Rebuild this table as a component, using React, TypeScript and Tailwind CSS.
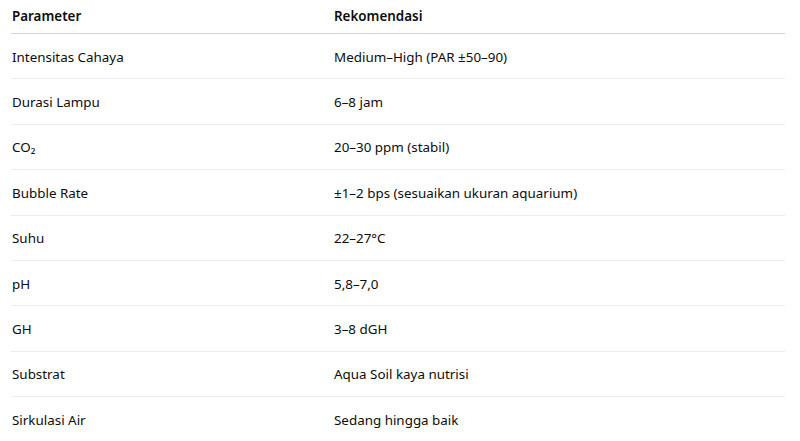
const rows: [string, string][] = [
  ['Intensitas Cahaya', 'Medium–High (PAR ±50–90)'],
  ['Durasi Lampu', '6–8 jam'],
  ['CO₂', '20–30 ppm (stabil)'],
  ['Bubble Rate', '±1–2 bps (sesuaikan ukuran aquarium)'],
  ['Suhu', '22–27°C'],
  ['pH', '5,8–7,0'],
  ['GH', '3–8 dGH'],
  ['Substrat', 'Aqua Soil kaya nutrisi'],
  ['Sirkulasi Air', 'Sedang hingga baik'],
]

export default function App() {
  return (
    <div
      className="w-[800px] h-[441px] overflow-hidden bg-white pl-[11px] pr-[15px] text-[13.4px] text-[#0d0d0d]"
      style={{ fontFamily: '"Noto Sans", "Open Sans", sans-serif' }}
    >
      <div className="grid grid-cols-[322px_1fr] h-[34px] items-center border-b border-[#d4d4d4] font-semibold">
        <div className="pl-px">Parameter</div>
        <div className="pl-px">Rekomendasi</div>
      </div>
      {rows.map(([p, r], i) => (
        <div
          key={i}
          className={`grid grid-cols-[322px_1fr] h-[45.4px] items-center pt-px ${i < rows.length - 1 ? 'border-b border-[#ececec]' : ''}`}
        >
          <div className="pl-px">{p}</div>
          <div className="pl-px">{r}</div>
        </div>
      ))}
    </div>
  )
}
